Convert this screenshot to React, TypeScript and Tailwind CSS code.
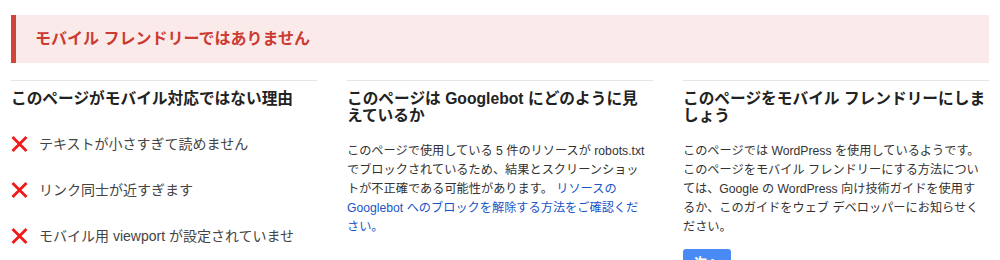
import { ReactNode } from 'react';

const font = { fontFamily: '"Liberation Sans", "Noto Sans CJK JP", sans-serif' };

const reasons = [
  'テキストが小さすぎて読めません',
  'リンク同士が近すぎます',
  'モバイル用 viewport が設定されていませ',
];

function Cross() {
  return (
    <svg width="17" height="16" viewBox="0 0 17 16" className="shrink-0">
      <path d="M1.5 1 L15.5 15 M15.5 1 L1.5 15" stroke="#f01818" strokeWidth="2.8" strokeLinecap="butt" />
    </svg>
  );
}

function Column({ title, children }: { title: string; children: ReactNode }) {
  return (
    <div className="border-t border-[#e6e6e6] pt-[9px]">
      <h2 className="text-[15.7px] font-bold leading-[17px] text-[#222]">{title}</h2>
      {children}
    </div>
  );
}

export default function App() {
  return (
    <div className="w-[1000px] h-[260px] overflow-hidden bg-white px-[11px] pt-[15px]" style={font}>
      {/* banner */}
      <div className="flex h-[48px] items-center border-l-[5px] border-[#d2443a] bg-[#fbeaea] pl-[19px]">
        <span className="text-[16px] font-bold text-[#cc3b31]">モバイル フレンドリーではありません</span>
      </div>

      <div className="mt-[17px] grid grid-cols-3 gap-[30px]">
        <Column title="このページがモバイル対応ではない理由">
          <ul className="mt-[27px] flex flex-col gap-[26px]">
            {reasons.map((r) => (
              <li key={r} className="flex h-5 items-center gap-[11px] whitespace-nowrap text-[14px] text-[#444]">
                <Cross />
                <span>{r}</span>
              </li>
            ))}
          </ul>
        </Column>

        <Column title="このページは Googlebot にどのように見えているか">
          <p className="mt-[18px] text-[12.2px] leading-[19px] text-[#333]">
            このページで使用している 5 件のリソースが robots.txt
            <br />
            でブロックされているため、結果とスクリーンショッ
            <br />
            トが不正確である可能性があります。{' '}
            <span className="text-[#1a55c6]">
              リソースの
              <br />
              Googlebot へのブロックを解除する方法をご確認くだ
              <br />
              さい。
            </span>
          </p>
        </Column>

        <Column title="このページをモバイル フレンドリーにしましょう">
          <p className="mt-[18px] text-[12.2px] leading-[19px] text-[#333]">
            このページでは WordPress を使用しているようです。
            <br />
            このページをモバイル フレンドリーにする方法につい
            <br />
            ては、Google の WordPress 向け技術ガイドを使用す
            <br />
            るか、このガイドをウェブ デベロッパーにお知らせく
            <br />
            ださい。
          </p>
          <button className="mt-[12px] h-[28px] w-[48px] rounded-[3px] bg-[#4a8af4] text-[13px] font-bold text-white">
            次へ
          </button>
        </Column>
      </div>
    </div>
  );
}
